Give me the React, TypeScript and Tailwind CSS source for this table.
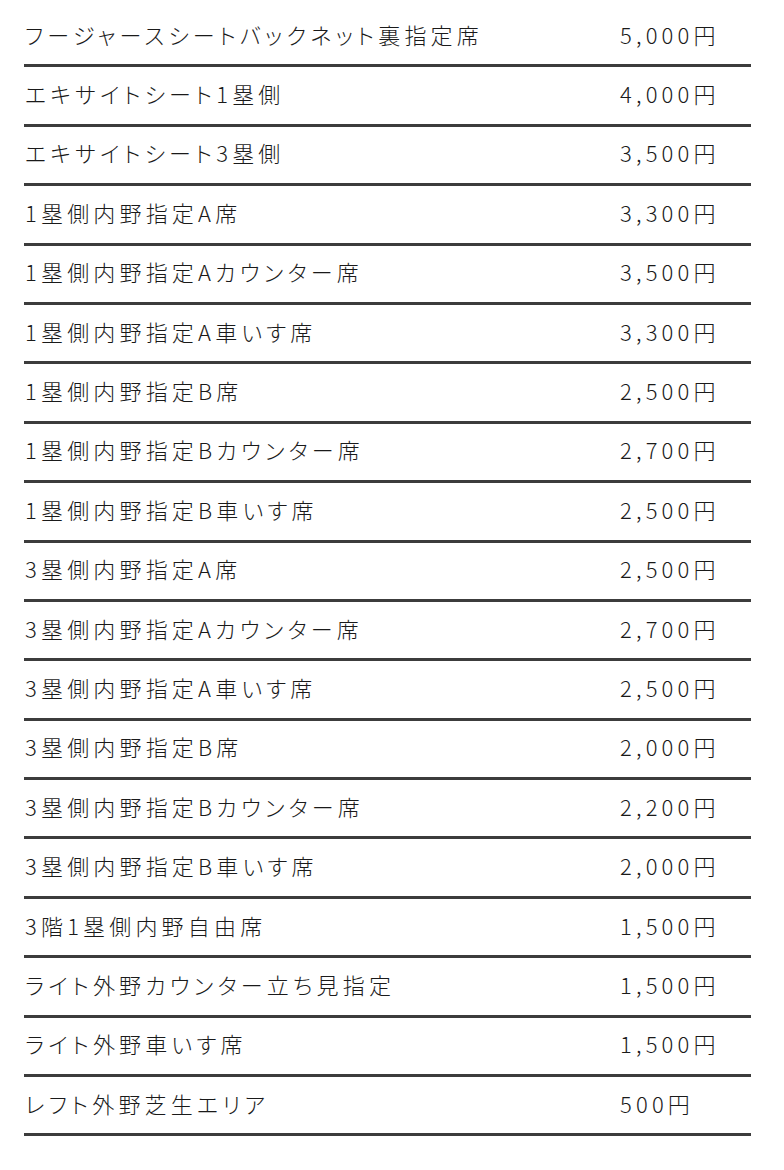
const rows: [string, string][] = [
  ["フージャースシートバックネット裏指定席", "5,000円"],
  ["エキサイトシート1塁側", "4,000円"],
  ["エキサイトシート3塁側", "3,500円"],
  ["1塁側内野指定A席", "3,300円"],
  ["1塁側内野指定Aカウンター席", "3,500円"],
  ["1塁側内野指定A車いす席", "3,300円"],
  ["1塁側内野指定B席", "2,500円"],
  ["1塁側内野指定Bカウンター席", "2,700円"],
  ["1塁側内野指定B車いす席", "2,500円"],
  ["3塁側内野指定A席", "2,500円"],
  ["3塁側内野指定Aカウンター席", "2,700円"],
  ["3塁側内野指定A車いす席", "2,500円"],
  ["3塁側内野指定B席", "2,000円"],
  ["3塁側内野指定Bカウンター席", "2,200円"],
  ["3塁側内野指定B車いす席", "2,000円"],
  ["3階1塁側内野自由席", "1,500円"],
  ["ライト外野カウンター立ち見指定", "1,500円"],
  ["ライト外野車いす席", "1,500円"],
  ["レフト外野芝生エリア", "500円"],
];

export default function App() {
  return (
    <div className="min-h-[1170px] bg-white pt-2">
      <div
        className="ml-6 w-[727px] text-[22px] tracking-[0.19em] text-[#1a1a1a]"
        style={{ fontFamily: '"Noto Sans CJK JP", "Noto Sans", sans-serif', fontFeatureSettings: '"palt"' }}
      >
        {rows.map(([name, price]) => (
          <div key={name} className="flex h-[59.4px] items-center border-b-[3px] border-[#3c3c3c] pb-1 font-light">
            <span className="w-[596px] pl-px">{name}</span>
            <span>{price}</span>
          </div>
        ))}
      </div>
    </div>
  );
}
